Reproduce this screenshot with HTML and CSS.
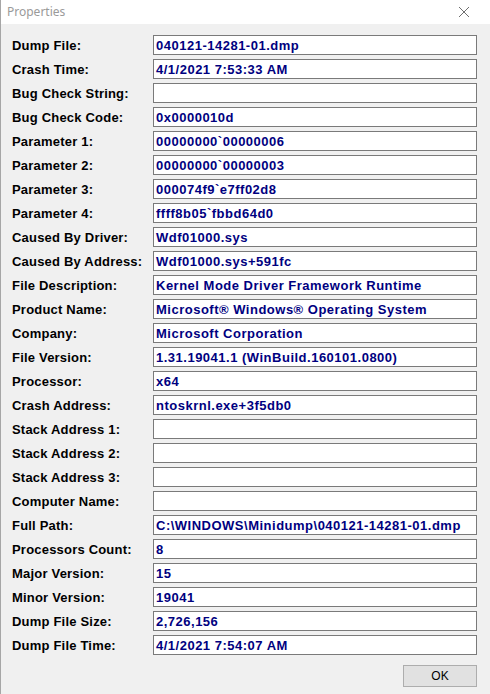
FILE: index.html
```html
<!DOCTYPE html>
<html>
<head>
<meta charset="utf-8">
<link rel="stylesheet" href="styles.css">
</head>
<body>
<div class="window">
  <div class="titlebar">
    <span class="title">Properties</span>
    <svg class="close" width="12" height="12" viewBox="0 0 12 12"><path d="M1 1 L11 11 M11 1 L1 11" stroke="#6f6f6f" stroke-width="1" fill="none"/></svg>
  </div>
  <div class="content">
    <div class="grid">
      <div class="label">Dump File:</div><div class="field">040121-14281-01.dmp</div>
      <div class="label">Crash Time:</div><div class="field">4/1/2021 7:53:33 AM</div>
      <div class="label">Bug Check String:</div><div class="field"></div>
      <div class="label">Bug Check Code:</div><div class="field">0x0000010d</div>
      <div class="label">Parameter 1:</div><div class="field">00000000`00000006</div>
      <div class="label">Parameter 2:</div><div class="field">00000000`00000003</div>
      <div class="label">Parameter 3:</div><div class="field">000074f9`e7ff02d8</div>
      <div class="label">Parameter 4:</div><div class="field">ffff8b05`fbbd64d0</div>
      <div class="label">Caused By Driver:</div><div class="field">Wdf01000.sys</div>
      <div class="label">Caused By Address:</div><div class="field">Wdf01000.sys+591fc</div>
      <div class="label">File Description:</div><div class="field">Kernel Mode Driver Framework Runtime</div>
      <div class="label">Product Name:</div><div class="field">Microsoft® Windows® Operating System</div>
      <div class="label">Company:</div><div class="field">Microsoft Corporation</div>
      <div class="label">File Version:</div><div class="field">1.31.19041.1 (WinBuild.160101.0800)</div>
      <div class="label">Processor:</div><div class="field">x64</div>
      <div class="label">Crash Address:</div><div class="field">ntoskrnl.exe+3f5db0</div>
      <div class="label">Stack Address 1:</div><div class="field"></div>
      <div class="label">Stack Address 2:</div><div class="field"></div>
      <div class="label">Stack Address 3:</div><div class="field"></div>
      <div class="label">Computer Name:</div><div class="field"></div>
      <div class="label">Full Path:</div><div class="field">C:\WINDOWS\Minidump\040121-14281-01.dmp</div>
      <div class="label">Processors Count:</div><div class="field">8</div>
      <div class="label">Major Version:</div><div class="field">15</div>
      <div class="label">Minor Version:</div><div class="field">19041</div>
      <div class="label">Dump File Size:</div><div class="field">2,726,156</div>
      <div class="label">Dump File Time:</div><div class="field">4/1/2021 7:54:07 AM</div>
    </div>
    <div class="buttons">
      <button class="ok">OK</button>
    </div>
  </div>
</div>
</body>
</html>
```
FILE: styles.css
```css
html, body {
  margin: 0;
  padding: 0;
  background: #f0f0f0;
}
.window {
  width: 490px;
  height: 694px;
  box-sizing: border-box;
  border-left: 1px solid #a6a6a6;
  background: #f0f0f0;
  overflow: hidden;
}
.titlebar {
  height: 24px;
  background: #ffffff;
  display: flex;
  align-items: center;
  justify-content: space-between;
  padding: 0 20px 0 6px;
}
.title {
  font-family: "Noto Sans", "Open Sans", sans-serif;
  font-size: 12px;
  color: #9a9a9a;
  margin-top: -2px;
}
.close {
  display: block;
}
.content {
  padding: 11px 0 0 11px;
}
.grid {
  display: grid;
  grid-template-columns: 141px 324px;
  grid-auto-rows: 20px;
  row-gap: 4px;
}
.label {
  font-family: "Liberation Sans", Arial, sans-serif;
  font-weight: bold;
  font-size: 13px;
  letter-spacing: 0.2px;
  color: #000;
  line-height: 20px;
  padding-top: 1px;
}
.field {
  box-sizing: border-box;
  height: 20px;
  background: #fff;
  border: 1px solid #7a7a7a;
  padding: 1px 2px 0 2px;
  font-family: "Liberation Sans", Arial, sans-serif;
  font-weight: bold;
  font-size: 13px;
  letter-spacing: 0.5px;
  color: #000080;
  line-height: 17px;
  white-space: nowrap;
  overflow: hidden;
}
.buttons {
  display: flex;
  justify-content: flex-end;
  padding: 10px 13px 0 0;
}
.ok {
  width: 74px;
  height: 22px;
  background: #e1e1e1;
  border: 1px solid #adadad;
  font-family: "Liberation Sans", Arial, sans-serif;
  font-size: 12px;
  color: #000;
  padding: 0;
}
```
